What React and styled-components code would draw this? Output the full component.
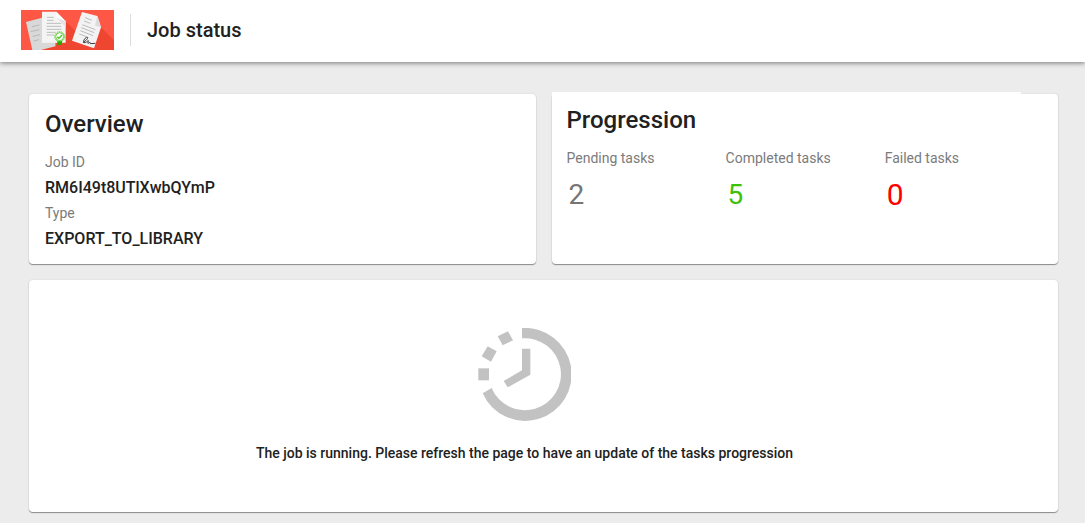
import React from "react";
import styled, { createGlobalStyle } from "styled-components";

const tasks = [
  { label: "Pending tasks", count: 2, color: "#757575", size: 28 },
  { label: "Completed tasks", count: 5, color: "#3fc10a", size: 28 },
  { label: "Failed tasks", count: 0, color: "#ff0000", size: 30 },
];

const LogoIcon = () => (
  <svg width="93" height="40" viewBox="0 0 279 120" role="img" aria-label="Documents">
    <rect width="279" height="120" fill="#ff5745" />
    <path d="M134 34 L183 82 L153 92 L181 120 H33 L103 110 Z" fill="#ee4630" />
    <path d="M240 52 L279 91 V120 H181 L153 92 L218 115 Z" fill="#ee4630" />
    <path d="M15 36 L63 23 V99 L103 97 V109 L60 120 H34 Z" fill="#d8d8d8" />
    <path
      d="M33 50 l22 -5 M29 65 l26 -6 M35 79 l22 -5 M38 93 l16 -4"
      stroke="#b8b8b8"
      strokeWidth="3"
      fill="none"
    />
    <path d="M63 5 H106 L134 34 V98 L63 99 Z" fill="#f4f4f4" />
    <path d="M106 5 V23 L134 34 Z" fill="#ffffff" />
    <path d="M106 23 L134 50 V34 Z" fill="#e2e2e2" />
    <path
      d="M78 22 h20 M78 31 h20 M77 40 h44 M77 49 h44 M77 58 h44 M77 67 h27 M77 75 h22"
      stroke="#bdbdbd"
      strokeWidth="3"
      fill="none"
    />
    <path d="M109 92 h14 v15 l-7 -4 l-7 4 Z" fill="#25a800" />
    <circle cx="116" cy="80" r="15" fill="none" stroke="#5fce3a" strokeWidth="3" strokeDasharray="4 2" />
    <circle cx="116" cy="80" r="12" fill="#ffffff" stroke="#5fce3a" strokeWidth="3" />
    <path d="M109 80 l5 5 l9 -10" fill="none" stroke="#46c51c" strokeWidth="4" />
    <path d="M183 6 L229 18 L240 52 L219 115 L153 92 Z" fill="#f3f3f3" />
    <path d="M229 18 L222 47 L240 52 Z" fill="#dcdcdc" />
    <path
      d="M192 23 l21 8 M189 33 l19 7 M184 44 l39 15 M181 53 l39 15 M178 62 l38 15 M175 72 l21 8"
      stroke="#bdbdbd"
      strokeWidth="3"
      fill="none"
    />
    <path
      d="M186 98 C189 96 203 85 200 82 C194 79 184 95 189 98 C193 100 200 92 202 92 C203 94 198 101 202 100 C206 97 208 95 208 101 L223 100"
      stroke="#3a3a3a"
      strokeWidth="3"
      fill="none"
    />
  </svg>
);

const RunningIcon = () => (
  <svg width="93" height="93" viewBox="24 24 279 279" fill="#c2c2c2" aria-hidden="true">
    <path d="M156 24 A139.500 139.500 0 1 1 38 220 L65 204 A108 108 0 1 0 156 55 Z" />
    <path d="M156 86 H181 V164 L113 202 L101 183 L156 151 Z" />
    <path d="M83 49 L114 34 L129 61 L98 76 Z" />
    <path d="M53 79 L80 94 L63 125 L35 109 Z" />
    <path d="M25 145 H57 V181 H25 Z" />
  </svg>
);

const App = () => {
  return (
    <>
      <GlobalStyle />
      <Header>
        <LogoIcon />
        <PageTitle>Job status</PageTitle>
      </Header>
      <Main>
        <Card>
          <CardTitle>Overview</CardTitle>
          <Details>
            <Label as="dt">Job ID</Label>
            <Value>RM6I49t8UTlXwbQYmP</Value>
            <Label as="dt">Type</Label>
            <Value>EXPORT_TO_LIBRARY</Value>
          </Details>
        </Card>
        <Card $flush>
          <Progression>
            <CardTitle>Progression</CardTitle>
            <TaskList>
              {tasks.map((task) => (
                <div key={task.label}>
                  <Label>{task.label}</Label>
                  <Count $color={task.color} $size={task.size}>
                    {task.count}
                  </Count>
                </div>
              ))}
            </TaskList>
          </Progression>
        </Card>
        <StatusCard>
          <RunningIcon />
          <Message>
            The job is running. Please refresh the page to have an update of the
            tasks progression
          </Message>
        </StatusCard>
      </Main>
    </>
  );
};

const GlobalStyle = createGlobalStyle`
  * {
    box-sizing: border-box;
  }

  body {
    margin: 0;
    background: #ececec;
    color: #212121;
    font-family: Roboto, "Liberation Sans", sans-serif;
  }
`;

const Header = styled.header`
  display: flex;
  align-items: center;
  gap: 16px;
  padding: 10px 21px 12px;
  background: #ffffff;
  box-shadow: 0 1px 5px rgba(0, 0, 0, 0.5);
`;

const PageTitle = styled.h1`
  margin: 0;
  padding-left: 16px;
  border-left: 1px solid #dddddd;
  font-size: 20px;
  font-weight: 500;
  line-height: 32px;
`;

const Main = styled.main`
  display: grid;
  grid-template-columns: 1fr 1fr;
  gap: 16px;
  padding: 32px 27px 11px 29px;
`;

const Card = styled.section`
  padding: ${({ $flush }) => ($flush ? "0" : "14px 16px 12px")};
  background: #ffffff;
  border-radius: 4px;
  box-shadow: 0 1px 1px rgba(0, 0, 0, 0.4), 0 0 2px rgba(0, 0, 0, 0.1);
`;

const CardTitle = styled.h2`
  margin: 0;
  font-size: 24px;
  font-weight: 500;
  line-height: 32px;
`;

const Details = styled.dl`
  margin: 10px 0 0;
`;

const Label = styled.div`
  color: #7b7b7b;
  font-size: 14px;
  line-height: 24px;
`;

const Value = styled.dd`
  margin: 0;
  font-size: 16px;
  font-weight: 500;
  line-height: 27px;
`;

const Progression = styled.div`
  width: calc(100% - 37px);
  margin-top: -2px;
  padding: 12px 0 0 15px;
  background: #ffffff;
`;

const TaskList = styled.div`
  display: grid;
  grid-template-columns: 35% 35% 1fr;
  margin-top: 10px;
`;

const Count = styled.div`
  padding: 4px 2px;
  color: ${({ $color }) => $color};
  font-size: ${({ $size }) => $size}px;
  line-height: 42px;
`;

const StatusCard = styled(Card)`
  display: flex;
  flex-direction: column;
  align-items: center;
  gap: 20px;
  grid-column: 1 / -1;
  padding: 48px 38px 47px 0;
`;

const Message = styled.p`
  margin: 0;
  font-size: 14px;
  font-weight: 500;
  line-height: 24px;
`;

export default App;
